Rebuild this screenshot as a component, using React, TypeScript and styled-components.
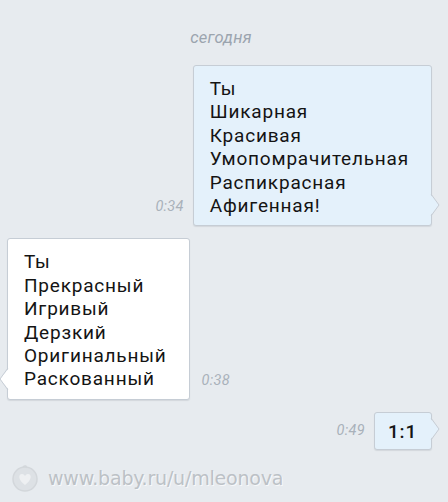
import React, { ReactElement } from "react"
import styled, { createGlobalStyle } from "styled-components"

const GlobalStyle = createGlobalStyle`
	html, body {
		margin: 0;
		padding: 0;
		background: #e7ebef;
	}
	body {
		font-family: Roboto, "Noto Sans", "Liberation Sans", sans-serif;
	}
`

interface Message {
	id: number
	lines: string[]
	time: string
	isMine: boolean
	bold?: boolean
}

const messages: Message[] = [
	{
		id: 1,
		lines: [
			"Ты",
			"Шикарная",
			"Красивая",
			"Умопомрачительная",
			"Распикрасная",
			"Афигенная!",
		],
		time: "0:34",
		isMine: true,
	},
	{
		id: 2,
		lines: [
			"Ты",
			"Прекрасный",
			"Игривый",
			"Дерзкий",
			"Оригинальный",
			"Раскованный",
		],
		time: "0:38",
		isMine: false,
	},
	{ id: 3, lines: ["1:1"], time: "0:49", isMine: true, bold: true },
]

const Screen = styled.div`
	width: 448px;
	height: 502px;
	display: flex;
	flex-direction: column;
	background: #e7ebef;
	overflow: hidden;
`

const DateLabel = styled.div`
	margin: 28px 0 17px;
	padding-right: 6px;
	height: 20px;
	line-height: 20px;
	text-align: center;
	font-size: 16.5px;
	font-style: italic;
	color: #9ba4ae;
	letter-spacing: 0.3px;
`

const Row = styled.div<{ $isMine: boolean }>`
	display: flex;
	flex-direction: ${(p): string => (p.$isMine ? "row" : "row-reverse")};
	justify-content: flex-end;
	align-items: flex-end;
	gap: ${(p): string => (p.$isMine ? "9px" : "12px")};
	padding: ${(p): string => (p.$isMine ? "0 16px 0 0" : "0 0 0 7px")};
	& + & {
		margin-top: 12px;
	}
`

const Time = styled.span`
	font-size: 14.5px;
	font-style: italic;
	color: #a9b1ba;
	line-height: 18px;
	margin-bottom: 10px;
	letter-spacing: 0.3px;
`

const Bubble = styled.div<{ $isMine: boolean; $bold?: boolean }>`
	position: relative;
	padding: ${(p): string => (p.$bold ? "7px 14px 6px 13px" : "11px 22px 8px 16px")};
	background: ${(p): string => (p.$isMine ? "#e4f1fb" : "#ffffff")};
	border: 1px solid #c6cdd5;
	border-radius: 3px;
	box-shadow: 0 1px 1px rgba(120, 130, 140, 0.18);
	font-size: 19px;
	letter-spacing: 0.8px;
	font-weight: ${(p): number => (p.$bold ? 500 : 400)};
	line-height: 23.4px;
	color: #141414;
`

const Line = styled.div`
	white-space: nowrap;
`

const Tail = styled.svg<{ $isMine: boolean }>`
	position: absolute;
	bottom: 9px;
	${(p): string => (p.$isMine ? "right: -9px;" : "left: -9px;")}
	width: 10px;
	height: 22px;
	overflow: visible;
`

const Watermark = styled.div`
	margin-top: auto;
	margin-bottom: 9px;
	display: flex;
	align-items: center;
	gap: 8px;
	padding-left: 10px;
	font-family: "DejaVu Sans", Verdana, sans-serif;
	font-size: 19px;
	letter-spacing: -0.2px;
	color: #bcc1c6;
	text-shadow: 1px 1px 0 rgba(255, 255, 255, 0.7);
`

const LogoSvg = styled.svg`
	width: 30px;
	height: 30px;
	flex: none;
`

const BubbleTail = ({ isMine, fill }: { isMine: boolean; fill: string }): ReactElement => (
	<Tail $isMine={isMine} viewBox="0 0 10 22">
		{isMine ? (
			<>
				<polygon points="0,0 9,11 0,22" fill={fill} />
				<polyline points="1,0 9,11 1,22" fill="none" stroke="#c6cdd5" strokeWidth="1" />
			</>
		) : (
			<>
				<polygon points="10,0 1,11 10,22" fill={fill} />
				<polyline points="9,0 1,11 9,22" fill="none" stroke="#c6cdd5" strokeWidth="1" />
			</>
		)}
	</Tail>
)

const Logo = (): ReactElement => (
	<LogoSvg viewBox="0 0 30 30">
		<circle cx="15" cy="16" r="12" fill="#dde1e5" stroke="#d3d7db" strokeWidth="1.5" />
		<path
			d="M15 22 C8 17 8 11 12 11 C14 11 15 13 15 13 C15 13 16 11 18 11 C22 11 22 17 15 22 Z"
			fill="#eef0f2"
		/>
		<path d="M13 4 C15 2 17 3 16 5" fill="none" stroke="#d3d7db" strokeWidth="1.5" />
	</LogoSvg>
)

export default function App(): ReactElement {
	return (
		<Screen>
			<GlobalStyle />
			<DateLabel>сегодня</DateLabel>
			{messages.map(
				(message: Message): ReactElement => (
					<Row $isMine={message.isMine} key={message.id}>
						<Time>{message.time}</Time>
						<Bubble $isMine={message.isMine} $bold={message.bold}>
							{message.lines.map(
								(line: string, i: number): ReactElement => (
									<Line key={i}>{line}</Line>
								),
							)}
							<BubbleTail
								isMine={message.isMine}
								fill={message.isMine ? "#e4f1fb" : "#ffffff"}
							/>
						</Bubble>
					</Row>
				),
			)}
			<Watermark>
				<Logo />
				<span>www.baby.ru/u/mleonova</span>
			</Watermark>
		</Screen>
	)
}
